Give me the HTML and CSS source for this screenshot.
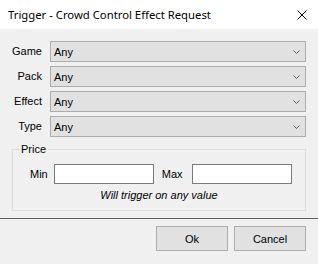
FILE: index.html
```html
<html>

<head>
    <meta charset="UTF-8">
    <title>Trigger - Crowd Control Effect Request</title>
    <link rel="stylesheet" href="styles.css">
</head>

<body>
    <div class="window">
        <div class="titlebar">
            <span class="title">Trigger - Crowd Control Effect Request</span>
            <svg class="close" width="10" height="10" viewBox="0 0 10 10">
                <path d="M0.5 0.5 L9.5 9.5 M9.5 0.5 L0.5 9.5" stroke="#000" stroke-width="1" fill="none" />
            </svg>
        </div>

        <div class="fields">
            <label>Game</label>
            <div class="combo"><span>Any</span><svg class="arrow" width="7" height="4" viewBox="0 0 7 4"><path d="M0.5 0.5 L3.5 3.5 L6.5 0.5" stroke="#606060" fill="none" /></svg></div>
            <label>Pack</label>
            <div class="combo"><span>Any</span><svg class="arrow" width="7" height="4" viewBox="0 0 7 4"><path d="M0.5 0.5 L3.5 3.5 L6.5 0.5" stroke="#606060" fill="none" /></svg></div>
            <label>Effect</label>
            <div class="combo"><span>Any</span><svg class="arrow" width="7" height="4" viewBox="0 0 7 4"><path d="M0.5 0.5 L3.5 3.5 L6.5 0.5" stroke="#606060" fill="none" /></svg></div>
            <label>Type</label>
            <div class="combo"><span>Any</span><svg class="arrow" width="7" height="4" viewBox="0 0 7 4"><path d="M0.5 0.5 L3.5 3.5 L6.5 0.5" stroke="#606060" fill="none" /></svg></div>
        </div>

        <fieldset class="price">
            <legend>Price</legend>
            <div class="range">
                <label class="min-label">Min</label>
                <input type="text" class="textbox">
                <label class="max-label">Max</label>
                <input type="text" class="textbox">
            </div>
            <div class="hint">Will trigger on any value</div>
        </fieldset>

        <div class="separator"></div>

        <div class="buttons">
            <button class="btn">Ok</button>
            <button class="btn">Cancel</button>
        </div>
    </div>
</body>

</html>
```

FILE: styles.css
```css
body {
    margin: 0;
    background-color: #f0f0f0;
    font-family: "Liberation Sans", Arial, sans-serif;
    font-size: 11px;
    color: #000;
}

.window {
    width: 318px;
    height: 264px;
    overflow: hidden;
}

.titlebar {
    height: 29px;
    background-color: #fff;
    display: flex;
    align-items: center;
    justify-content: space-between;
    padding: 0 11px 0 8px;
}

.title {
    font-family: "Noto Sans", sans-serif;
    font-size: 11.3px;
    color: #000;
}

.close {
    display: block;
}

.fields {
    display: grid;
    grid-template-columns: 42px 1fr;
    column-gap: 8px;
    row-gap: 4px;
    margin: 12px 12px 0 0;
}

.fields label {
    text-align: right;
    line-height: 21px;
}

.combo {
    height: 21px;
    box-sizing: border-box;
    border: 1px solid #adadad;
    background-color: #e1e1e1;
    display: flex;
    align-items: center;
    justify-content: space-between;
    padding: 0 5px 0 3px;
}

.arrow {
    display: block;
}

.price {
    margin: 6px 12px 0 12px;
    border: 1px solid #dcdcdc;
    padding: 8px 0 8px 17px;
}

.price legend {
    padding: 0 2px;
    margin-left: -11px;
    line-height: 13px;
}

.range {
    display: flex;
    align-items: center;
}

.textbox {
    width: 100px;
    height: 20px;
    box-sizing: border-box;
    border: 1px solid #7a7a7a;
    background-color: #fff;
    margin: 0;
    padding: 0 3px;
    font: inherit;
}

.min-label {
    margin-right: 6px;
}

.max-label {
    margin: 0 9px 0 8px;
}

.hint {
    font-style: italic;
    text-align: center;
    line-height: 13px;
    margin: 5px 0 0 -17px;
}

.separator {
    margin-top: 7px;
    border-top: 1px solid #646464;
}

.buttons {
    display: flex;
    justify-content: flex-end;
    gap: 6px;
    margin: 7px 12px 0 0;
}

.btn {
    width: 72px;
    height: 25px;
    border: 1px solid #adadad;
    background-color: #e1e1e1;
    font: inherit;
    color: #000;
    padding: 0;
}
```
